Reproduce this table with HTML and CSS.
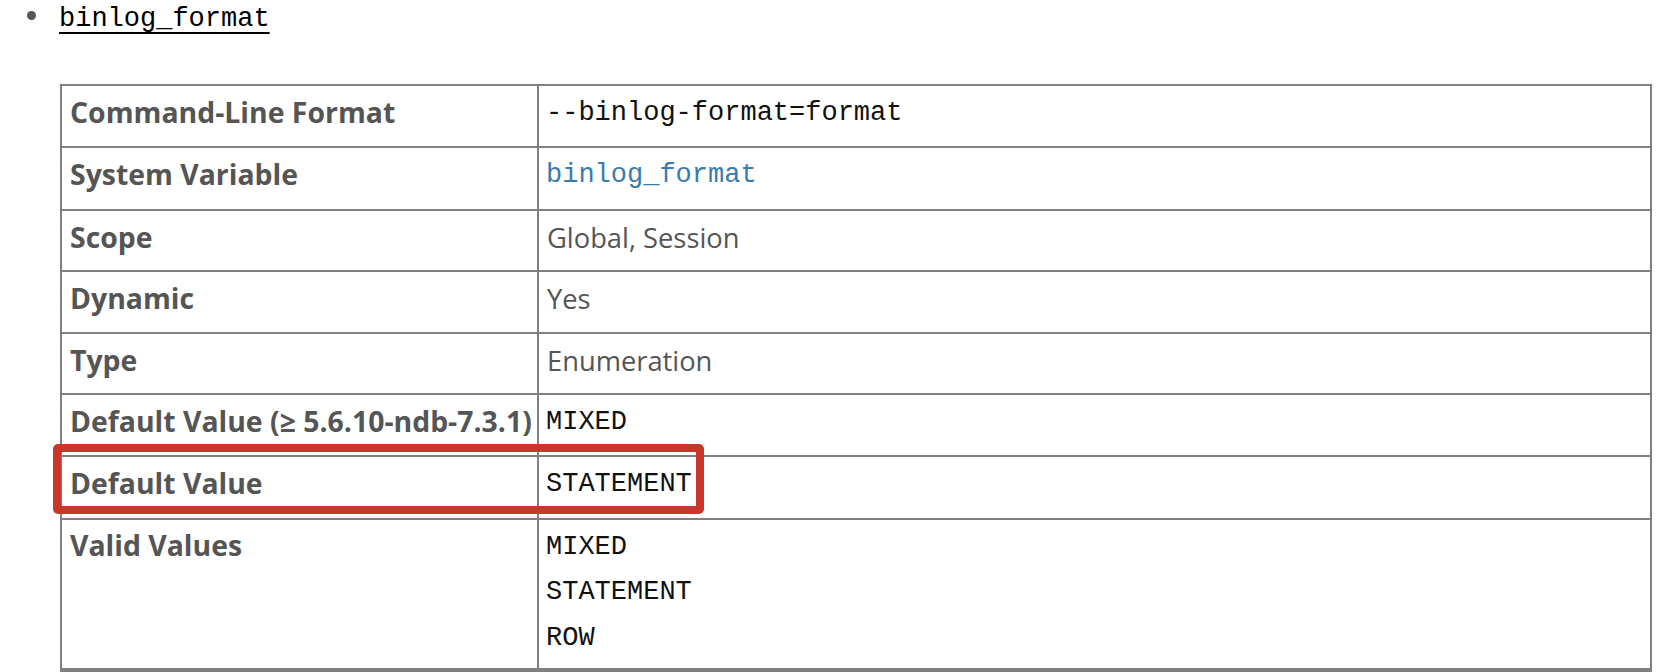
FILE: index.html
```html
<!DOCTYPE html>
<html>
<head>
<meta charset="utf-8">
<link rel="stylesheet" href="styles.css">
</head>
<body>
<div class="item">
  <span class="bullet"></span>
  <a class="varname">binlog_format</a>
</div>
<div class="tablewrap">
  <table class="props">
    <colgroup><col class="c1"><col class="c2"></colgroup>
    <tr><th>Command-Line Format</th><td class="mono">--binlog-format=format</td></tr>
    <tr><th>System Variable</th><td class="mono link">binlog_format</td></tr>
    <tr><th>Scope</th><td>Global, Session</td></tr>
    <tr><th>Dynamic</th><td>Yes</td></tr>
    <tr><th>Type</th><td>Enumeration</td></tr>
    <tr><th>Default Value (≥ 5.6.10-ndb-7.3.1)</th><td class="mono">MIXED</td></tr>
    <tr><th>Default Value</th><td class="mono">STATEMENT</td></tr>
    <tr class="last"><th>Valid Values</th><td class="mono"><p>MIXED</p><p>STATEMENT</p><p>ROW</p></td></tr>
  </table>
  <div class="highlight"></div>
</div>
</body>
</html>
```
FILE: styles.css
```css
html, body {
  margin: 0;
  padding: 0;
  background: #fff;
}
body {
  font-family: "Open Sans", "Liberation Sans", sans-serif;
  color: #555;
}
.item {
  display: flex;
  align-items: flex-start;
  height: 84px;
}
.bullet {
  width: 9px;
  height: 9px;
  border-radius: 50%;
  background: #555;
  margin: 11px 0 0 27px;
}
.varname {
  margin-left: 23px;
  font-family: "Liberation Mono", monospace;
  font-size: 27px;
  line-height: 39px;
  color: #000;
  text-decoration: underline;
  text-decoration-thickness: 2px;
  text-underline-offset: 6px;
}
.tablewrap {
  position: relative;
  margin-left: 60px;
  width: 1592px;
}
.props {
  border-collapse: collapse;
  table-layout: fixed;
  width: 1592px;
}
.c1 { width: 477px; }
.props th, .props td {
  border: 2px solid #808080;
  vertical-align: top;
  text-align: left;
  padding: 7px 8px 13px;
  line-height: 39.4px;
  font-size: 27.3px;
}
.props th {
  font-weight: 700;
  font-size: 28.4px;
  color: #555;
  white-space: nowrap;
  padding-top: 7px;
  padding-bottom: 13px;
}
.props td {
  color: #555;
  font-weight: 400;
}
.props td.mono {
  font-family: "Liberation Mono", monospace;
  font-size: 27px;
  color: #111;
  padding-top: 8px;
  padding-left: 7px;
}
.props td.link {
  color: #3a7bae;
}
.props td p {
  margin: 0;
}
.props td p + p {
  margin-top: 6px;
}
.props tr.last th {
  padding-top: 6px;
}
.props tr.last th, .props tr.last td {
  border-bottom-width: 4px;
  padding-bottom: 10px;
}
.highlight {
  position: absolute;
  left: -7px;
  top: 360px;
  width: 651px;
  height: 70px;
  box-sizing: border-box;
  border: 8.5px solid #c8372a;
  border-radius: 5px;
}
```
